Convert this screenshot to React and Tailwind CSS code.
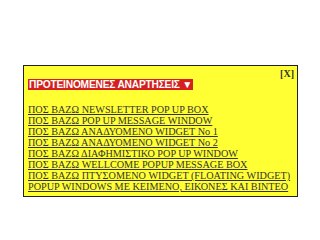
const links = [
  'ΠΟΣ ΒΑΖΩ NEWSLETTER POP UP BOX',
  'ΠΟΣ ΒΑΖΩ POP UP MESSAGE WINDOW',
  'ΠΟΣ ΒΑΖΩ ΑΝΑΔΥΟΜΕΝΟ WIDGET No 1',
  'ΠΟΣ ΒΑΖΩ ΑΝΑΔΥΟΜΕΝΟ WIDGET No 2',
  'ΠΟΣ ΒΑΖΩ ΔΙΑΦΗΜΙΣΤΙΚΟ POP UP WINDOW',
  'ΠΟΣ ΒΑΖΩ WELLCOME POPUP MESSAGE BOX',
  'ΠΟΣ ΒΑΖΩ ΠΤΥΣΟΜΕΝΟ WIDGET (FLOATING WIDGET)',
  'POPUP WINDOWS ΜΕ ΚΕΙΜΕΝΟ, ΕΙΚΟΝΕΣ ΚΑΙ ΒΙΝΤΕΟ',
];

export default function App() {
  return (
    <div className="h-[200px] w-[300px] overflow-hidden bg-white pl-[23px] pr-[2px] pt-[65px]">
      <div className="h-[132px] border border-[#222] bg-[#ffff33] pl-[4px] pr-[3px] pt-[3px]">
        <div className="flex items-start justify-between">
          <div className="mt-[10px] bg-[#d42020] px-[1px] text-[10.2px] font-bold leading-[11px] tracking-[-0.2px] text-white [font-family:'Liberation_Sans',Arial,sans-serif]">
            ΠΡΟΤΕΙΝΟΜΕΝΕΣ ΑΝΑΡΤΗΣΕΙΣ ▼
          </div>
          <span className="text-[10px] font-bold leading-[10px] text-[#333] [font-family:'Liberation_Serif',serif]">[X]</span>
        </div>
        <ul className="mt-[14px] whitespace-nowrap [font-family:'Liberation_Serif',serif] text-[10.2px] leading-[11px]">
          {links.map((t) => (
            <li key={t}>
              <a href="#" className="text-[#333] underline">{t}</a>
            </li>
          ))}
        </ul>
      </div>
    </div>
  );
}
